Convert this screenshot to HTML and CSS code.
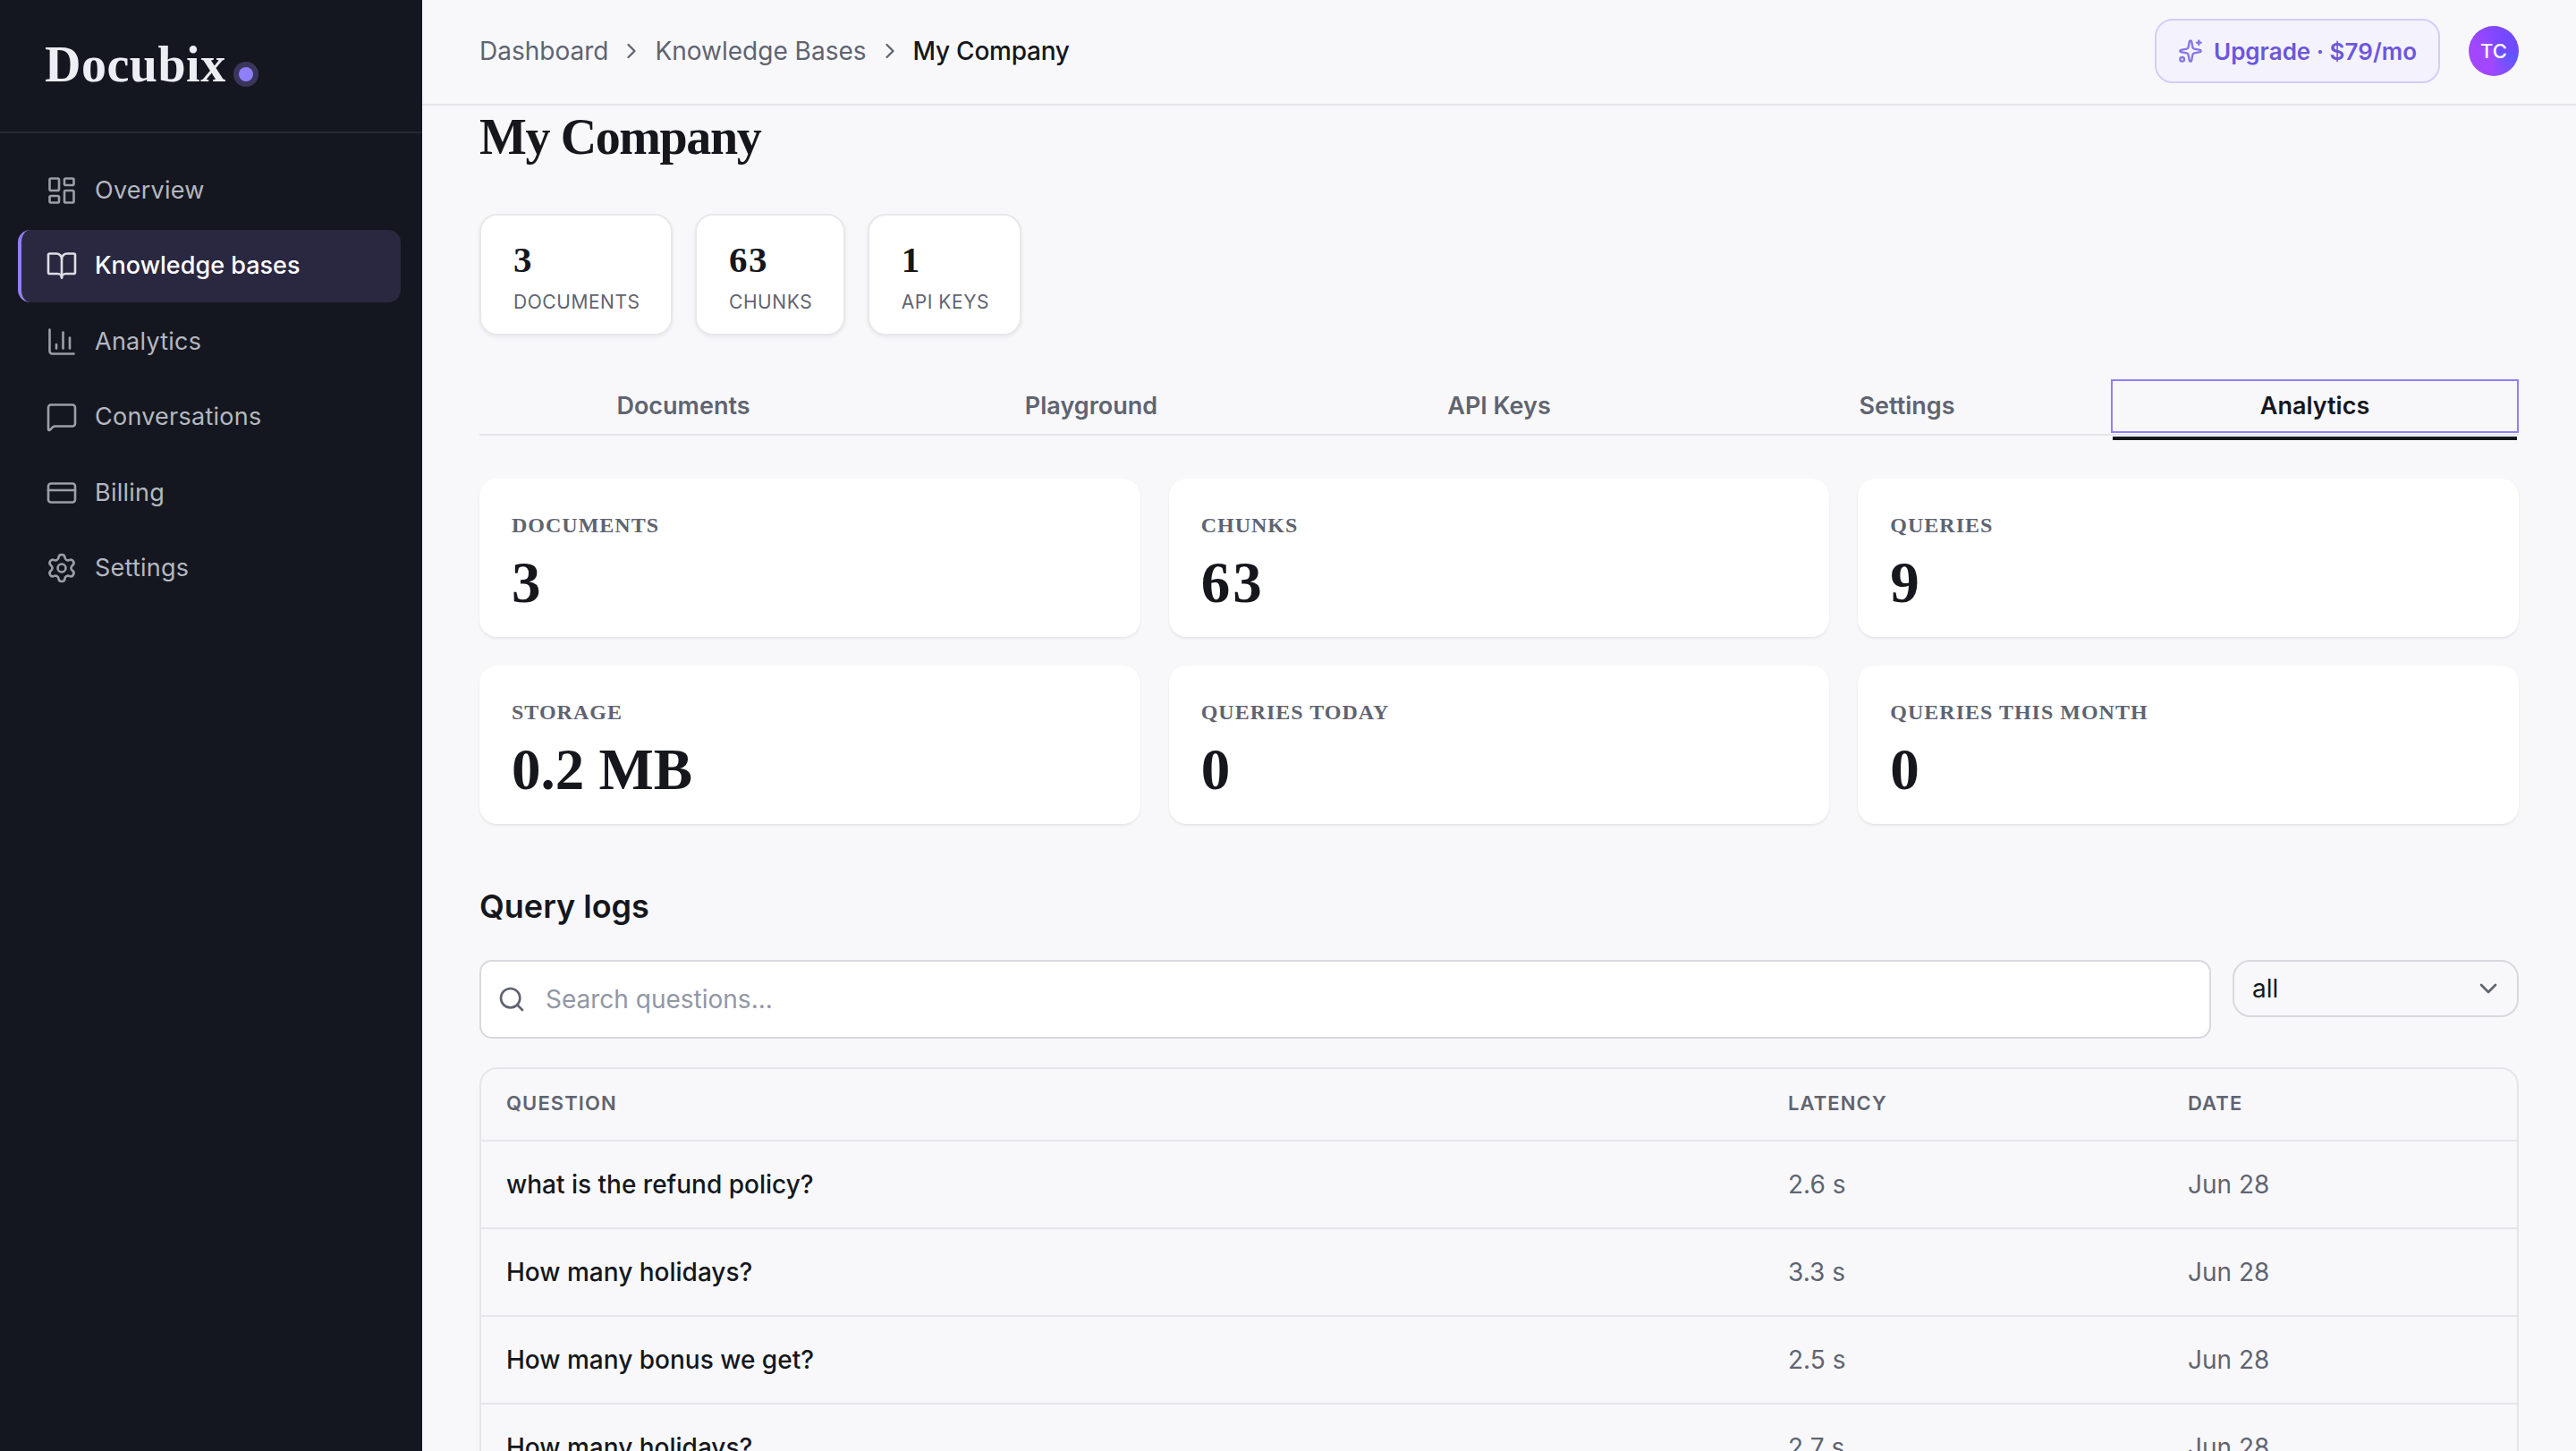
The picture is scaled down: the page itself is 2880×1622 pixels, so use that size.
FILE: index.html
```html
<!DOCTYPE html>
<html lang="en">

<head>
    <meta charset="UTF-8">
    <meta name="viewport" content="width=device-width, initial-scale=1.0">
    <title>My Company - Docubix</title>
    <link rel="stylesheet" href="styles.css">
</head>

<body>
    <aside class="sidebar">
        <div class="logo"><span class="logo-name">Docubix</span><i class="logo-dot"></i></div>
        <ul class="nav">
            <li class="nav-item">
                <svg class="icon" viewBox="0 0 24 24"><rect x="3" y="3" width="7" height="9" rx="1"/><rect x="14" y="3" width="7" height="5" rx="1"/><rect x="14" y="12" width="7" height="9" rx="1"/><rect x="3" y="16" width="7" height="5" rx="1"/></svg>
                <span>Overview</span>
            </li>
            <li class="nav-item active">
                <svg class="icon" viewBox="0 0 24 24"><path d="M12 7v14"/><path d="M3 18a1 1 0 0 1-1-1V4a1 1 0 0 1 1-1h5a4 4 0 0 1 4 4 4 4 0 0 1 4-4h5a1 1 0 0 1 1 1v13a1 1 0 0 1-1 1h-6a3 3 0 0 0-3 3 3 3 0 0 0-3-3z"/></svg>
                <span>Knowledge bases</span>
            </li>
            <li class="nav-item">
                <svg class="icon" viewBox="0 0 24 24"><path d="M3 3v16a2 2 0 0 0 2 2h16"/><path d="M18 17V9"/><path d="M13 17V5"/><path d="M8 17v-3"/></svg>
                <span>Analytics</span>
            </li>
            <li class="nav-item">
                <svg class="icon" viewBox="0 0 24 24"><path d="M22 17a2 2 0 0 1-2 2H6.828a2 2 0 0 0-1.414.586l-2.202 2.202A.71.71 0 0 1 2 21.286V5a2 2 0 0 1 2-2h16a2 2 0 0 1 2 2z"/></svg>
                <span>Conversations</span>
            </li>
            <li class="nav-item">
                <svg class="icon" viewBox="0 0 24 24"><rect x="2" y="5" width="20" height="14" rx="2"/><path d="M2 10h20"/></svg>
                <span>Billing</span>
            </li>
            <li class="nav-item">
                <svg class="icon" viewBox="0 0 24 24"><path d="M9.671 4.136a2.34 2.34 0 0 1 4.659 0 2.34 2.34 0 0 0 3.319 1.915 2.34 2.34 0 0 1 2.33 4.033 2.34 2.34 0 0 0 0 3.831 2.34 2.34 0 0 1-2.33 4.033 2.34 2.34 0 0 0-3.319 1.915 2.34 2.34 0 0 1-4.659 0 2.34 2.34 0 0 0-3.32-1.915 2.34 2.34 0 0 1-2.33-4.033 2.34 2.34 0 0 0 0-3.831A2.34 2.34 0 0 1 6.35 6.051a2.34 2.34 0 0 0 3.319-1.915"/><circle cx="12" cy="12" r="3"/></svg>
                <span>Settings</span>
            </li>
        </ul>
    </aside>

    <main class="main">
        <header class="topbar">
            <nav class="crumbs">
                <span>Dashboard</span>
                <svg class="icon" viewBox="0 0 24 24"><path d="m9 18 6-6-6-6"/></svg>
                <span>Knowledge Bases</span>
                <svg class="icon" viewBox="0 0 24 24"><path d="m9 18 6-6-6-6"/></svg>
                <span class="current">My Company</span>
            </nav>
            <div class="account">
                <button class="upgrade">
                    <svg class="icon" viewBox="0 0 24 24"><path d="M11.017 2.814a1 1 0 0 1 1.966 0l1.051 5.558a2 2 0 0 0 1.594 1.594l5.558 1.051a1 1 0 0 1 0 1.966l-5.558 1.051a2 2 0 0 0-1.594 1.594l-1.051 5.558a1 1 0 0 1-1.966 0l-1.051-5.558a2 2 0 0 0-1.594-1.594l-5.558-1.051a1 1 0 0 1 0-1.966l5.558-1.051a2 2 0 0 0 1.594-1.594z"/><path d="M20 2v4"/><path d="M22 4h-4"/><circle cx="4" cy="20" r="2"/></svg>
                    <span>Upgrade · $79/mo</span>
                </button>
                <div class="avatar">TC</div>
            </div>
        </header>

        <div class="content">
            <h1 class="title">My Company</h1>

            <div class="pills">
                <div class="pill"><b>3</b><span>DOCUMENTS</span></div>
                <div class="pill"><b>63</b><span>CHUNKS</span></div>
                <div class="pill"><b>1</b><span>API KEYS</span></div>
            </div>

            <div class="tabs">
                <div class="tab">Documents</div>
                <div class="tab">Playground</div>
                <div class="tab">API Keys</div>
                <div class="tab">Settings</div>
                <div class="tab active">Analytics</div>
            </div>

            <div class="stats">
                <div class="stat"><span>DOCUMENTS</span><b class="count">3</b></div>
                <div class="stat"><span>CHUNKS</span><b class="count">63</b></div>
                <div class="stat"><span>QUERIES</span><b class="count">9</b></div>
                <div class="stat"><span>STORAGE</span><b>0.2 MB</b></div>
                <div class="stat"><span>QUERIES TODAY</span><b class="count">0</b></div>
                <div class="stat"><span>QUERIES THIS MONTH</span><b class="count">0</b></div>
            </div>

            <h2 class="subtitle">Query logs</h2>

            <div class="filters">
                <div class="search">
                    <svg class="icon" viewBox="0 0 24 24"><circle cx="11" cy="11" r="8"/><path d="m21 21-4.34-4.34"/></svg>
                    <input type="text" placeholder="Search questions...">
                </div>
                <div class="select">
                    <span>all</span>
                    <svg class="icon" viewBox="0 0 24 24"><path d="m6 9 6 6 6-6"/></svg>
                </div>
            </div>

            <div class="logs">
                <div class="row head"><span>QUESTION</span><span>LATENCY</span><span>DATE</span></div>
                <div class="row"><span class="question">what is the refund policy?</span><span>2.6 s</span><span>Jun 28</span></div>
                <div class="row"><span class="question">How many holidays?</span><span>3.3 s</span><span>Jun 28</span></div>
                <div class="row"><span class="question">How many bonus we get?</span><span>2.5 s</span><span>Jun 28</span></div>
                <div class="row"><span class="question">How many holidays?</span><span>2.7 s</span><span>Jun 28</span></div>
            </div>
        </div>
    </main>
</body>

</html>
```
FILE: styles.css
```css
* {
    padding: 0;
    margin: 0;
    box-sizing: border-box;
    list-style: none;
}

body {
    display: flex;
    width: 100%;
    height: 100vh;
    overflow: hidden;
    background: #f8f8fb;
    color: #15171c;
    font-family: Inter, "Liberation Sans", sans-serif;
    font-size: 28px;
}

.icon {
    flex: none;
    width: 36px;
    height: 36px;
    fill: none;
    stroke: currentColor;
    stroke-width: 2;
    stroke-linecap: round;
    stroke-linejoin: round;
}

/* sidebar */
.sidebar {
    flex: none;
    width: 472px;
    height: 100%;
    background: #14171f;
    color: #b4b7c0;
}

.logo {
    display: flex;
    align-items: center;
    gap: 14px;
    height: 149px;
    padding-left: 50px;
    border-bottom: 2px solid #272a32;
}

.logo-name {
    margin-top: -3px;
    color: #eceef4;
    font: bold 56px/64px "Liberation Serif", serif;
    letter-spacing: .5px;
}

.logo-dot {
    width: 16px;
    height: 16px;
    margin-top: 18px;
    border-radius: 50%;
    background: #8f7ff8;
    box-shadow: 0 0 0 6px #39355c;
}

.nav {
    display: flex;
    flex-direction: column;
    gap: 3.5px;
    padding: 23px 24px 0 20px;
}

.nav-item {
    display: flex;
    align-items: center;
    gap: 19px;
    height: 81px;
    padding-left: 27px;
    border-left: 4px solid transparent;
    border-radius: 14px;
    font-size: 27px;
    letter-spacing: .25px;
}

.nav-item span {
    margin-top: -1px;
}

.nav-item .icon {
    stroke-width: 1.75;
    color: #9b9ea8;
}

.nav-item.active {
    background: #2a2840;
    border-left-color: #8f7ff8;
    color: #fff;
    font-weight: 500;
    letter-spacing: 0;
}

.nav-item.active .icon {
    color: #dcdde3;
}

/* top bar */
.main {
    display: flex;
    flex: 1;
    flex-direction: column;
    min-width: 0;
}

.topbar {
    display: flex;
    flex: none;
    justify-content: space-between;
    height: 118px;
    padding: 0 64px;
    border-bottom: 2px solid #e6e6ea;
}

.crumbs {
    display: flex;
    align-items: center;
    gap: 12px;
    height: 114px;
    color: #5f6470;
}

.crumbs .icon {
    width: 28px;
    height: 28px;
}

.crumbs .current {
    color: #15171c;
    font-weight: 500;
    letter-spacing: -.25px;
}

.account {
    display: flex;
    align-items: center;
    gap: 32px;
    height: 114px;
}

.upgrade {
    display: flex;
    align-items: center;
    gap: 12px;
    width: 319px;
    height: 72px;
    padding-left: 24px;
    border: 2px solid #d3cdf8;
    border-radius: 20px;
    background: #f4f3fd;
    color: #6b57dc;
    font: 600 26px Inter, sans-serif;
    white-space: nowrap;
}

.upgrade .icon {
    width: 28px;
    height: 28px;
    opacity: .8;
}

.avatar {
    width: 56px;
    height: 56px;
    border-radius: 50%;
    background: conic-gradient(from 100deg, #5b57ff, #a347ff 25%, #a347ff 50%, #7748ff 80%, #6c4cff);
    color: #fff;
    font-size: 22px;
    font-weight: 500;
    line-height: 56px;
    text-align: center;
}

/* page */
.content {
    flex: 1;
    min-height: 0;
    overflow: hidden;
    padding: 3px 64px 0;
}

.title {
    height: 118px;
    font: bold 56px/64px "Liberation Serif", serif;
    letter-spacing: -1.4px;
}

.pills {
    display: flex;
    gap: 25px;
    height: 136px;
    margin-bottom: 49px;
}

.pill {
    display: flex;
    flex-direction: column;
    gap: 9px;
    padding: 26px 34.5px 0 36px;
    border: 2px solid #e8e8ec;
    border-radius: 20px;
    background: #fff;
    box-shadow: 0 2px 4px rgba(20, 23, 31, .07);
}

.pill b {
    font: bold 41px/46px "Liberation Serif", serif;
    letter-spacing: 1.5px;
}

.pill span {
    color: #5f6470;
    font-size: 21px;
    line-height: 31px;
    letter-spacing: .55px;
}

.tabs {
    display: flex;
    height: 63px;
    margin-bottom: 48px;
    border-bottom: 2px solid #e6e6ea;
}

.tab {
    width: 20%;
    height: 60px;
    color: #5f6470;
    font-size: 27px;
    font-weight: 600;
    line-height: 60px;
    text-align: center;
}

.tab.active {
    position: relative;
    border: 2px solid #8f7ff8;
    color: #15171c;
    line-height: 56px;
}

/* thick marker hangs below the tab line */
.tab.active::after {
    content: "";
    position: absolute;
    left: 0;
    right: 0;
    bottom: -10px;
    height: 4px;
    background: #15171c;
}

.stats {
    display: grid;
    grid-template-columns: repeat(3, 1fr);
    gap: 32px;
    margin-bottom: 67px;
}

.stat {
    display: flex;
    flex-direction: column;
    gap: 12px;
    height: 177px;
    padding: 36px 36px 0;
    border-radius: 20px;
    background: #fff;
    box-shadow: 0 2px 3px rgba(20, 23, 31, .08);
}

.stat span {
    color: #5f6470;
    font: bold 24px/32px "Liberation Serif", serif;
    letter-spacing: 1px;
}

.stat b {
    font: bold 65px/72px "Liberation Serif", serif;
}

.stat .count {
    letter-spacing: 3px;
}

.subtitle {
    height: 85px;
    font-size: 36px;
    font-weight: 600;
    line-height: 50px;
}

.filters {
    display: flex;
    align-items: flex-start;
    gap: 24px;
    margin-bottom: 32px;
}

.search {
    display: flex;
    flex: 1;
    align-items: center;
    gap: 22px;
    height: 88px;
    padding-left: 18px;
    border: 2px solid #d8d8de;
    border-radius: 14px;
    background: #fff;
    color: #5f6470;
}

.search .icon {
    width: 32px;
    height: 32px;
}

.search input {
    flex: 1;
    border: none;
    outline: none;
    background: none;
    font: 28px Inter, sans-serif;
}

.search input::placeholder {
    color: #9297a5;
}

.select {
    display: flex;
    align-items: center;
    justify-content: space-between;
    width: 320px;
    height: 64px;
    padding: 0 16px 0 20px;
    border: 2px solid #d8d8de;
    border-radius: 20px;
}

.select .icon {
    width: 32px;
    height: 32px;
    color: #5f6470;
}

.logs {
    border: 2px solid #e6e6ea;
    border-radius: 20px;
}

.row {
    display: grid;
    grid-template-columns: 1433px 447px 1fr;
    align-items: center;
    height: 98px;
    padding-left: 28px;
    border-bottom: 2px solid #e6e6ea;
    color: #5f6470;
}

.row.head {
    height: 81px;
    padding-bottom: 3px;
    font-size: 22px;
    font-weight: 600;
    letter-spacing: 1.1px;
}

.question {
    color: #15171c;
    font-weight: 500;
}
```
